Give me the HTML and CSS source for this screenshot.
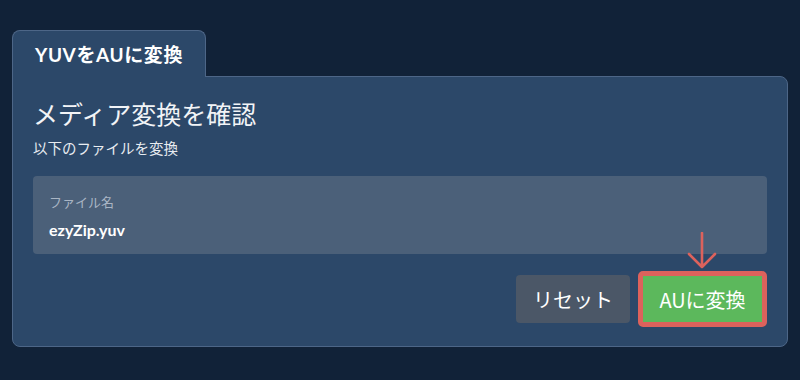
FILE: index.html
```html
<!DOCTYPE html>
<html lang="ja">
<head>
  <meta charset="UTF-8">
  <title>YUVをAUに変換</title>
  <link rel="stylesheet" href="styles.css">
</head>
<body>

  <div class="wrap">
    <div class="tab">YUVをAUに変換</div>

    <div class="panel">
      <h1>メディア変換を確認</h1>
      <p class="sub">以下のファイルを変換</p>

      <div class="file-box">
        <div class="file-label">ファイル名</div>
        <div class="file-name">ezyZip.yuv</div>
      </div>

      <div class="actions">
        <button class="btn btn-reset">リセット</button>
        <div class="convert-wrap">
          <!-- pointer arrow -->
          <svg class="arrow" width="32" height="38" viewBox="0 0 32 38">
            <path d="M16 1 V35 M3 22 L16 35 L29 22" fill="none" stroke="#dc625c" stroke-width="2.6" stroke-linecap="round" stroke-linejoin="round"/>
          </svg>
          <button class="btn btn-convert">AUに変換</button>
        </div>
      </div>
    </div>
  </div>

</body>
</html>
```

FILE: styles.css
```css
body {
  margin: 0;
  background-color: #112238;
  font-family: "Noto Sans CJK JP", sans-serif;
  color: #fff;
}

.wrap {
  padding: 30px 12px 0;
}

.tab {
  display: inline-block;
  position: relative;
  z-index: 1;
  box-sizing: border-box;
  height: 47px;
  margin-bottom: -1px;
  padding: 11px 22px 0;
  line-height: 26px;
  font-family: Lato, "Noto Sans CJK JP", sans-serif;
  font-size: 19px;
  font-weight: bold;
  letter-spacing: 0.6px;
  background-color: #2c4869;
  border: 1px solid #4d6687;
  border-bottom: none;
  border-radius: 8px 8px 0 0;
}

.panel {
  background-color: #2c4869;
  border: 1px solid #4d6687;
  border-radius: 0 8px 8px 8px;
  padding: 20px 20px 19px;
}

h1 {
  margin: 0;
  font-size: 25px;
  line-height: 32px;
  font-weight: normal;
  color: #f2f4f7;
}

.sub {
  margin: 8px 0 0;
  font-size: 14.5px;
  line-height: 22px;
  color: #e8ecf1;
}

.file-box {
  margin-top: 17px;
  background-color: #4b6079;
  border-radius: 4px;
  padding: 16px 16px 14px;
}

.file-label {
  font-size: 13px;
  line-height: 20px;
  color: #a9b5c4;
}

.file-name {
  margin-top: 8px;
  font-family: Lato, sans-serif;
  font-size: 16px;
  line-height: 20px;
  font-weight: bold;
}

.actions {
  display: flex;
  justify-content: flex-end;
  align-items: center;
  gap: 8px;
  margin-top: 17px;
}

.btn {
  font-family: "Noto Sans CJK JP", sans-serif;
  font-size: 20px;
  color: #fff;
  border: none;
  border-radius: 4px;
  cursor: pointer;
}

.btn-reset {
  width: 114px;
  height: 48px;
  background-color: #4b5767;
}

.convert-wrap {
  position: relative;
}

.btn-convert {
  display: block;
  box-sizing: border-box;
  width: 129px;
  height: 56px;
  background-color: #5cb85c;
  border: 5px solid #dc625c;
  border-radius: 5px;
}

.arrow {
  position: absolute;
  left: 48px;
  top: -39px;
}
```
